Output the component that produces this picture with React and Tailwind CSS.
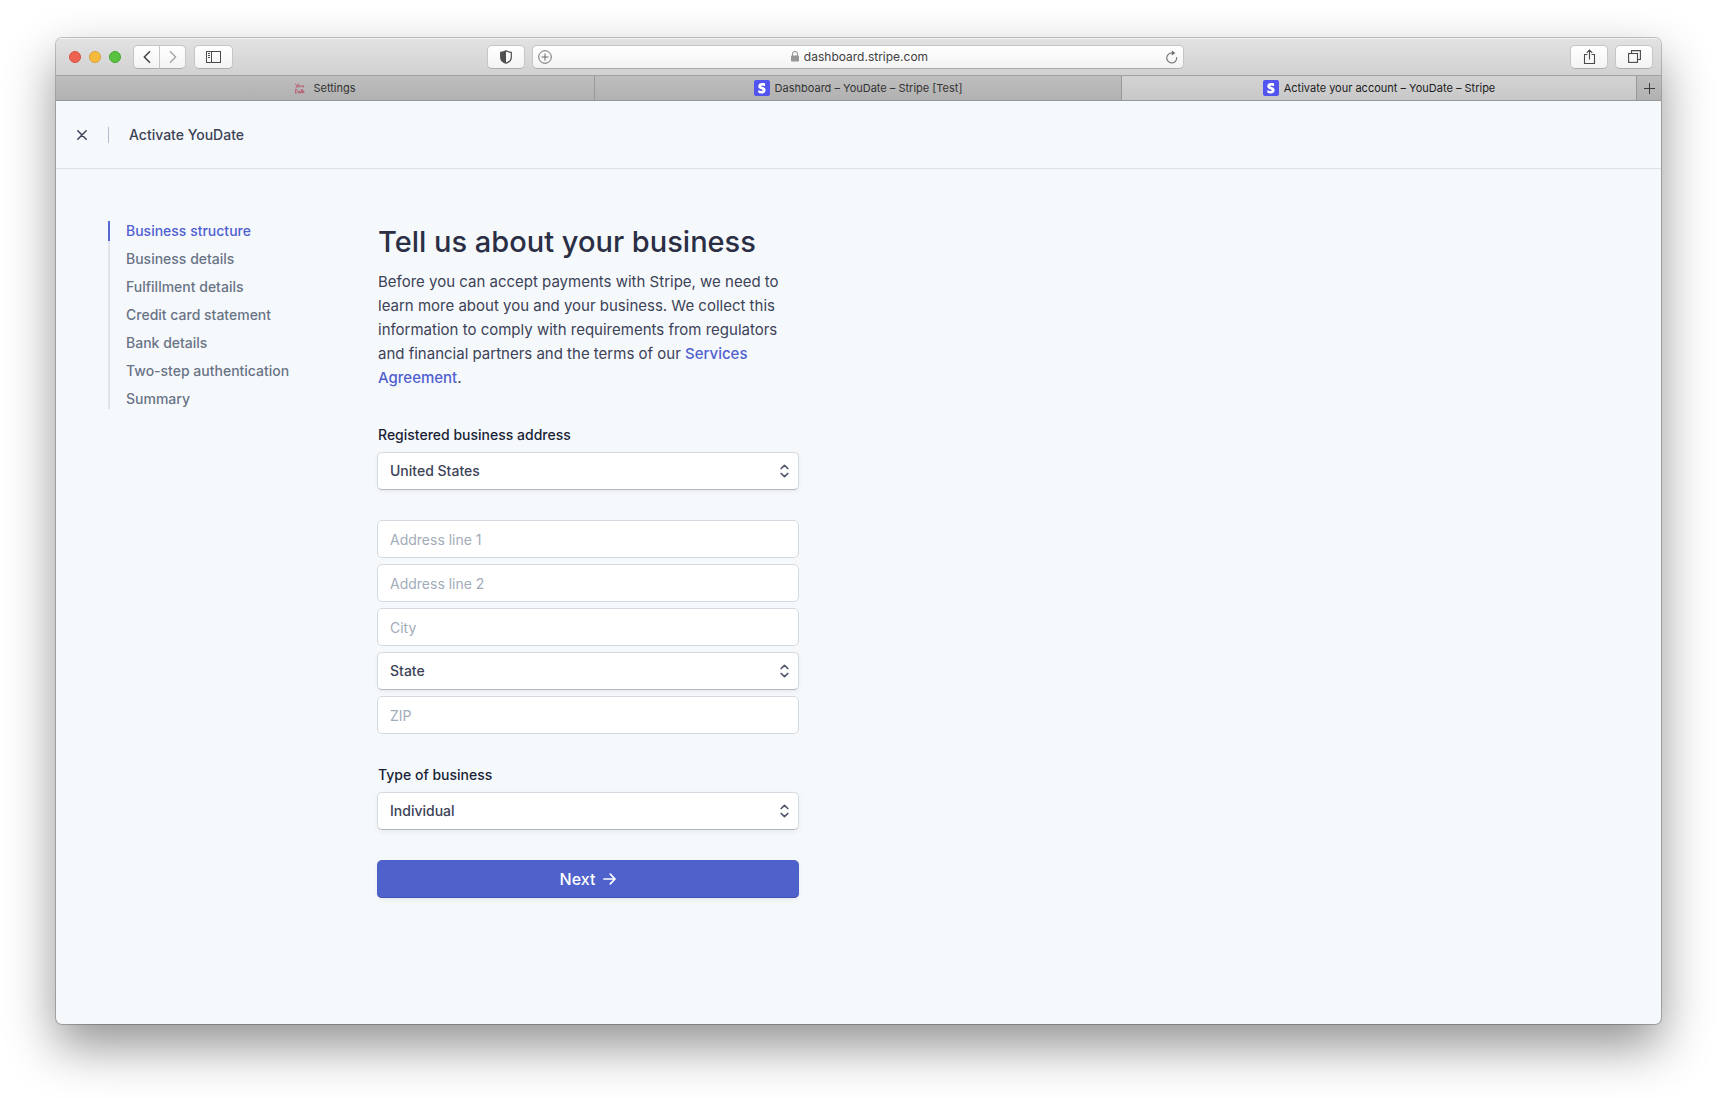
const steps = [
  "Business structure",
  "Business details",
  "Fulfillment details",
  "Credit card statement",
  "Bank details",
  "Two-step authentication",
  "Summary",
];

function ToolButton({ label, className = "", children }) {
  return (
    <button
      type="button"
      aria-label={label}
      className={
        "flex h-6 items-center justify-center border border-[#c6c6c6] border-b-[#adadad] bg-linear-to-b from-white to-[#f3f3f3] text-[#4a4a4a] " +
        className
      }
    >
      {children}
    </button>
  );
}

function Toolbar() {
  return (
    <div className="grid h-[38px] grid-cols-[431fr_697fr_477fr] items-center border-b border-[#a2a2a2] bg-linear-to-b from-[#e3e3e3] to-[#d1d1d1] shadow-[inset_0_1px_0_#f3f3f3]">
      <div className="flex items-center pl-3">
        <div className="flex gap-2 pl-px">
          <span className="size-3 rounded-full border border-[#d8503f] bg-[#ed6351]" />
          <span className="size-3 rounded-full border border-[#dd9f33] bg-[#f6bb3d]" />
          <span className="size-3 rounded-full border border-[#46a732] bg-[#59c341]" />
        </div>
        <div className="ml-3 flex">
          <ToolButton label="Back" className="w-[27px] rounded-l-[5px]">
            <svg width="8" height="14" viewBox="0 0 8 14" fill="none" stroke="currentColor" strokeWidth="1.6">
              <path d="M7 1.2 1.4 7 7 12.8" />
            </svg>
          </ToolButton>
          <ToolButton label="Forward" className="-ml-px w-[27px] rounded-r-[5px]">
            <svg width="8" height="14" viewBox="0 0 8 14" fill="none" stroke="#a6a6a6" strokeWidth="1.4">
              <path d="M1 1.2 6.6 7 1 12.8" />
            </svg>
          </ToolButton>
        </div>
        <ToolButton label="Show sidebar" className="ml-2 w-[39px] rounded-[5px]">
          <svg width="15" height="12" viewBox="0 0 15 12" fill="none" stroke="currentColor">
            <rect x="0.5" y="0.5" width="14" height="11" />
            <path d="M5.5 0.5v11M2 2.5h2M2 4.5h2M2 6.5h2" />
          </svg>
        </ToolButton>
      </div>

      <div className="flex items-center gap-[7px]">
        <ToolButton label="Privacy report" className="w-[38px] rounded-[5px]">
          <svg width="12" height="14" viewBox="0 0 12 14">
            <path d="M6 .7C4.4 1.7 2.6 2.2.7 2.3v5.2c0 2.7 2 4.6 5.3 5.8 3.300-1.200 5.300-3.100 5.300-5.800V2.300C9.400 2.200 7.600 1.700 6 .7Z" fill="none" stroke="#4f4f4f" strokeWidth="1.200" />
            <path d="M6 .7C4.400 1.700 2.600 2.200.7 2.300v5.200c0 2.700 2 4.600 5.300 5.800Z" fill="#4f4f4f" />
          </svg>
        </ToolButton>
        <div className="flex h-6 grow items-center rounded-[5px] border border-[#c6c6c6] border-b-[#adadad] bg-linear-to-b from-white to-[#f3f3f3] px-[5px]">
          <button type="button" aria-label="Add bookmark">
            <svg className="block" width="14" height="14" viewBox="0 0 14 14" fill="none" stroke="#6b6b6b">
              <circle cx="7" cy="7" r="6.300" />
              <path d="M7 3.500v7M3.500 7h7" />
            </svg>
          </button>
          <div className="flex grow items-center justify-center gap-1 text-xs leading-5 text-[#3f3f3f]">
            <svg width="10" height="11" viewBox="0 0 10 11">
              <path d="M2.500 5V3a2.500 2.500 0 0 1 5 0v2" fill="none" stroke="#979797" strokeWidth="1.100" />
              <rect x="1" y="4.600" width="8" height="5.900" rx=".8" fill="#979797" />
            </svg>
            <span>dashboard.stripe.com</span>
          </div>
          <button type="button" aria-label="Reload">
            <svg className="block" width="12" height="14" viewBox="0 0 12 14" fill="none" stroke="#6e6e6e" strokeWidth="1.100">
              <path d="M10.700 7.200A5 5 0 1 1 6.500 3" />
              <path d="M5.800.6 9.400 3 5.800 5.400Z" fill="#6e6e6e" stroke="none" />
            </svg>
          </button>
        </div>
      </div>

      <div className="flex justify-end gap-[7px] pr-2">
        <ToolButton label="Share" className="w-[38px] rounded-[5px]">
          <svg width="13" height="16" viewBox="0 0 13 16" fill="none" stroke="currentColor" strokeWidth="1.100">
            <path d="M4.500 5.500h-3v9h10v-9h-3M6.500 10.500V1.200M3.700 3.900 6.500 1.100l2.800 2.800" />
          </svg>
        </ToolButton>
        <ToolButton label="Show tab overview" className="w-[38px] rounded-[5px]">
          <svg width="13" height="13" viewBox="0 0 13 13" fill="none" stroke="currentColor" strokeWidth="1.100">
            <rect x=".6" y="3.500" width="8.900" height="8.900" />
            <path d="M3.500 3.300V.6h8.900v8.900H9.700" />
          </svg>
        </ToolButton>
      </div>
    </div>
  );
}

function StripeIcon() {
  return (
    <svg width="16" height="16" viewBox="0 0 16 16" className="shrink-0">
      <rect width="16" height="16" rx="2" fill="#5254f0" />
      <path
        d="M7.200 6.100c0-.5.4-.7 1-.7.900 0 2 .3 2.900.8V3.500c-1-.4-1.900-.5-2.900-.5-2.400 0-4 1.200-4 3.300 0 3.200 4.400 2.700 4.400 4.100 0 .6-.5.700-1.100.7-1 0-2.200-.4-3.200-1v2.700c1.100.5 2.200.7 3.200.7 2.400 0 4.100-1.200 4.100-3.300 0-3.500-4.400-2.900-4.400-4.100Z"
        fill="#fff"
      />
    </svg>
  );
}

function TabBar() {
  const tab = "flex h-full min-w-0 items-center justify-center text-[11px]";
  const idle = " border-r border-[#999] bg-linear-to-b from-[#bebebe] to-[#b1b1b1] text-[#333]";
  return (
    <div className="grid h-[25px] grid-cols-[539fr_527fr_515fr_24px] border-b border-[#979797]">
      <button type="button" className={tab + idle + " gap-2"}>
        <svg width="11" height="11" viewBox="0 0 11 11" fill="none" stroke="#b9566b" strokeWidth=".9">
          <path d="M1.300.800 2.700 2.900M4.600.600 2 5M5.200 2.300c-1.400 0-1.300 2.200 0 2s1.200-2 0-2M7.300 2.200c-.4 2.400 1.400 2.300 1.900.200-.1 1.500.3 2 1 1.700M1.800 6.200l-.5 3.900c3.200-.3 2.700-4 .1-3.900M5.800 8.200c-1.700-.2-1.900 2.400-.2 1.900l.4-1.700c-.1 1.400.2 2 .9 1.600L8 6.300l-.4 3.100c.2.800.8.700 1.200-.1M6.800 7.500h2M8.900 9.200c1.300-.2 1.200-1.500.3-1.200-.9.500-.6 2.200 1.300 1.700" />
        </svg>
        Settings
      </button>
      <button type="button" className={tab + idle + " gap-[5px]"}>
        <StripeIcon />
        Dashboard – YouDate – Stripe [Test]
      </button>
      <button type="button" className={tab + " gap-[5px] border-r border-[#999] bg-linear-to-b from-[#d3d3d3] to-[#c8c8c8] text-[#1c1c1c]"}>
        <StripeIcon />
        Activate your account – YouDate – Stripe
      </button>
      <button type="button" aria-label="New tab" className={tab + " bg-linear-to-b from-[#bebebe] to-[#b1b1b1]"}>
        <svg width="12" height="12" viewBox="0 0 12 12" stroke="#3c3c3c">
          <path d="M6.500 1v11M1 6.500h11" />
        </svg>
      </button>
    </div>
  );
}

function Select({ id, label, value }) {
  return (
    <div className="relative">
      <select
        id={id}
        aria-label={label}
        defaultValue={value}
        className="block h-[38px] w-full appearance-none rounded-[5px] border border-[#d5dae1] border-b-[#b3b6be] bg-white px-3 text-sm font-medium text-[#3c4257] shadow-[0_2px_4px_rgba(60,66,87,0.08)]"
      >
        <option>{value}</option>
      </select>
      <svg
        className="pointer-events-none absolute top-3 right-[10px]"
        width="9"
        height="14"
        viewBox="0 0 9 14"
        fill="none"
        stroke="#4f566b"
        strokeWidth="1.700"
        strokeLinecap="round"
        strokeLinejoin="round"
      >
        <path d="M1.200 4.500 4.500 1.400l3.300 3.100M1.200 9.500l3.300 3.100 3.300-3.100" />
      </svg>
    </div>
  );
}

function TextField({ label }) {
  return (
    <input
      type="text"
      aria-label={label}
      placeholder={label}
      className="block h-[38px] w-full rounded-[5px] border border-[#d5dae1] bg-white px-3 text-sm text-[#3c4257] placeholder:text-[#a3acb9]"
    />
  );
}

function SetupNav() {
  return (
    <nav className="w-[269px] shrink-0">
      <ul className="flex flex-col gap-2 text-sm leading-5 font-medium shadow-[inset_2px_0_0_#e0e4ec]">
        {steps.map((step, i) => (
          <li key={step}>
            <a
              href="#"
              className={
                i === 0
                  ? "block border-l-2 border-[#5469d4] pl-4 text-[#5060cf]"
                  : "block border-l-2 border-transparent pl-4 text-[#697386]"
              }
            >
              {step}
            </a>
          </li>
        ))}
      </ul>
    </nav>
  );
}

export default function App() {
  return (
    <div className="flex min-h-screen flex-col bg-white px-14 pt-[38px] pb-[74px] font-['Inter',sans-serif]">
      <div className="flex grow flex-col overflow-hidden rounded-md bg-[#f6f9fc] shadow-[0_0_0_1px_rgba(0,0,0,0.22),0_22px_50px_rgba(0,0,0,0.43)]">
        <Toolbar />
        <TabBar />
        <header className="flex h-[68px] items-center border-b border-[#dde2ea] pl-[21px]">
          <button type="button" aria-label="Close">
            <svg className="block" width="10" height="10" viewBox="0 0 10 10" stroke="#3c4257" strokeWidth="1.500" strokeLinecap="round">
              <path d="M.8.8 9.200 9.200M9.200.8.8 9.200" />
            </svg>
          </button>
          <span className="ml-[21px] h-4 w-px bg-[#b4bccb]" />
          <span className="ml-5 text-sm leading-5 font-medium text-[#3c4257]">Activate YouDate</span>
        </header>
        <div className="flex grow pt-[52px] pl-13">
          <SetupNav />
          <main className="w-[422px]">
            <h1 className="pl-px text-[29px] leading-[42px] font-medium text-[#2a2f45]">Tell us about your business</h1>
            <p className="mt-[7px] pl-px text-[15px] leading-6 text-[#3c4257]">
              Before you can accept payments with Stripe, we need to learn more about you and your business. We collect
              this information to comply with requirements from regulators and financial partners and the terms of our{" "}
              <a href="#" className="font-medium text-[#5060cf]">Services Agreement</a>.
            </p>
            <form>
              <label htmlFor="country" className="mt-[35px] mb-[7px] block pl-px text-sm leading-5 font-medium text-[#1a1f36]">
                Registered business address
              </label>
              <Select id="country" value="United States" />
              <div className="mt-[30px] flex flex-col gap-1.5">
                <TextField label="Address line 1" />
                <TextField label="Address line 2" />
                <TextField label="City" />
                <Select id="state" label="State" value="State" />
                <TextField label="ZIP" />
              </div>
              <label htmlFor="type" className="mt-[31px] mb-[7px] block pl-px text-sm leading-5 font-medium text-[#1a1f36]">
                Type of business
              </label>
              <Select id="type" value="Individual" />
              <button
                type="button"
                className="mt-[30px] flex h-[38px] w-full items-center justify-center gap-2 rounded-[5px] bg-[#4f61cb] text-base font-medium text-white shadow-[inset_0_-1px_0_#4151b5,0_2px_4px_rgba(60,66,87,0.08)]"
              >
                Next
                <svg width="13" height="12" viewBox="0 0 13 12" fill="none" stroke="currentColor" strokeWidth="1.700" strokeLinecap="round" strokeLinejoin="round">
                  <path d="M1 6h10.800M7.300 1.200 12 6l-4.700 4.800" />
                </svg>
              </button>
            </form>
          </main>
        </div>
      </div>
    </div>
  );
}
